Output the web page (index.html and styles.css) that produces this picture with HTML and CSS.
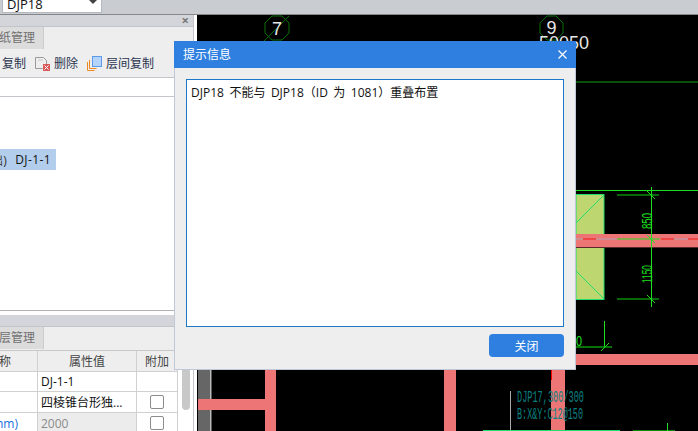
FILE: index.html
```html
<!DOCTYPE html>
<html lang="zh">
<head>
<meta charset="utf-8">
<title>提示信息</title>
<link rel="stylesheet" href="styles.css">
</head>
<body>
<div class="page">
  <header class="topbar">
    <div class="combo"><span class="combo-text">DJP18</span><span class="combo-arrow"></span></div>
  </header>
  <main class="workspace">
    <aside class="side">
      <section class="pane pane-top">
        <div class="pane-title"><span class="pane-x">×</span></div>
        <div class="tabs"><div class="tab">图纸管理</div></div>
        <div class="toolbar">
          <span class="tool tool-first">复制</span>
          <span class="tool tool-del">
            <svg class="icon" viewBox="0 0 16 16" width="16" height="16"><path d="M.5 2.500h8l3 3v4M.5 2.500v11h7" fill="none" stroke="#9a9a9a"/><path d="M3 5h5" stroke="#c8c8c8"/><rect x="8" y="9" width="7" height="7" fill="#d85a5a"/><path d="M9.500 10.500l4 4m0-4l-4 4" stroke="#fff"/></svg>
            删除
          </span>
          <span class="tool tool-copy">
            <svg class="icon" viewBox="0 0 16 16" width="16" height="16"><path d="M.5 7v8.500h7M2.500 5v8.500h7" fill="none" stroke="#ee8a22"/><rect x="5.500" y="1.500" width="9" height="10" fill="#b4d4fb" stroke="#5b9bea"/></svg>
            层间复制
          </span>
        </div>
        <div class="subbar"></div>
        <div class="tree">
          <div class="tree-row"><span class="tree-clip">(基础)</span><span class="tree-name">DJ-1-1</span></div>
        </div>
      </section>
      <section class="pane pane-bottom">
        <div class="pane-title"></div>
        <div class="tabs"><div class="tab">图层管理</div></div>
        <div class="props">
          <div class="grid">
            <div class="cell head c1 c1-head"><span class="clip-end">属性名称</span></div>
            <div class="cell head c2">属性值</div>
            <div class="cell head c3">附加</div>
            <div class="cell c1"></div>
            <div class="cell c2 val">DJ-1-1</div>
            <div class="cell c3"></div>
            <div class="cell c1"></div>
            <div class="cell c2 val">四棱锥台形独...</div>
            <div class="cell c3"><span class="check"></span></div>
            <div class="cell c1 blue"><span class="clip-end">长度(mm)</span></div>
            <div class="cell c2 val muted">2000</div>
            <div class="cell c3"><span class="check"></span></div>
          </div>
          <div class="scroll"><div class="thumb"></div></div>
        </div>
      </section>
    </aside>
    <div class="gutter"></div>
    <svg class="canvas" viewBox="197 14 501 417" width="501" height="417">
      <rect x="197" y="14" width="501" height="417" fill="#000"/>
      <rect x="198" y="369" width="12" height="62" fill="#666"/>
      <rect x="210" y="369" width="1.500" height="62" fill="#bbb"/>
      <rect x="198" y="398" width="68" height="11" fill="#ee7575"/>
      <rect x="265" y="369" width="11" height="62" fill="#ee7575"/>
      <rect x="444" y="369" width="12" height="62" fill="#ee7575"/>
      <rect x="551" y="369" width="14" height="62" fill="#ee7575"/>
      <rect x="551" y="369" width="1" height="10" fill="#f00"/>
      <rect x="576" y="353" width="122" height="11" fill="#ee7575"/>

      <polygon points="272,15 282,15 289,22 289,32 282,39 272,39 265,32 265,22" fill="none" stroke="#0a6e0a"/>
      <path d="M263 41L289 15" stroke="#0a6e0a"/>
      <text x="277" y="34" class="axis">7</text>
      <polygon points="547,15 556,15 563,22 563,32 556,39 547,39 540,32 540,22" fill="none" stroke="#0a6e0a"/>
      <text x="551.500" y="33" class="axis">9</text>
      <text x="539" y="48" class="dim-big">50050</text>

      <rect x="576" y="80" width="122" height="2" fill="#0a4f0a"/>
      <rect x="576" y="189" width="122" height="1" fill="#1ee01e"/>

      <rect x="576" y="193.500" width="28" height="105" fill="#bdd66f" stroke="#1ee06a"/>
      <path d="M604 194L576 222M576 270L604 298" stroke="#1ee06a"/>
      <rect x="576" y="233" width="122" height="13" fill="#ee7575"/>
      <rect x="576" y="246" width="122" height="1" fill="#5a2a2a"/>
      <path d="M576 238h7" stroke="#aaa"/>
      <path d="M583 238h13M661 238h13M688 238h10" stroke="#f01818"/>
      <path d="M596 238h21M674 238h14" stroke="#b0a0b0"/>
      <path d="M617 238h43" stroke="#1ee01e"/>

      <path d="M617 194h42M617 298h42" stroke="#0a8a0a" stroke-width="1.500"/>
      <path d="M651.500 186V306" stroke="#1ee01e"/>
      <path d="M647 190l8 8M647 234l8 8M647 294l8 8" stroke="#1ee01e"/>
      <text class="dim-v" transform="translate(652 228) rotate(-90)" textLength="16" lengthAdjust="spacingAndGlyphs">850</text>
      <text class="dim-v" transform="translate(652 282) rotate(-90)" textLength="18" lengthAdjust="spacingAndGlyphs">1150</text>

      <path d="M604.500 320V346" stroke="#1ee01e"/>
      <path d="M576 346h36" stroke="#0a9a0a" stroke-width="1.500"/>
      <path d="M601 350l8-8" stroke="#1ee01e"/>
      <text x="576" y="345" class="dim-small" textLength="6" lengthAdjust="spacingAndGlyphs">0</text>

      <path d="M510.500 390V431" stroke="#aaa"/>
      <text x="517" y="401" class="label" textLength="67" lengthAdjust="spacingAndGlyphs">DJP17,300/300</text>
      <text x="517" y="418" class="label" textLength="66" lengthAdjust="spacingAndGlyphs">B:X&amp;Y:C12@150</text>
      <rect x="483" y="429" width="137" height="2" fill="#1ee06a"/>
      <rect x="633" y="429" width="42" height="2" fill="#0a8a0a"/>
      <path d="M667.500 422V431" stroke="#1ee01e"/>
    </svg>
  </main>

  <section class="dialog">
    <div class="dialog-head">
      <span class="dialog-title">提示信息</span>
      <svg class="dialog-x" viewBox="0 0 9 9" width="9" height="9"><path d="M.5.5l8 8m0-8l-8 8" stroke="#fff" stroke-width="1.200" fill="none"/></svg>
    </div>
    <div class="dialog-body">
      <div class="message">DJP18 不能与 DJP18（ID 为 1081）重叠布置</div>
      <div class="actions"><button class="close-btn">关闭</button></div>
    </div>
  </section>
</div>
</body>
</html>
```
FILE: styles.css
```css
* { box-sizing: border-box; }
html, body { margin: 0; padding: 0; }
body {
  width: 698px;
  height: 431px;
  overflow: hidden;
  background: #fff;
  font-family: "Open Sans", "Noto Sans CJK SC", sans-serif;
  font-size: 12px;
  color: #111;
}
.page { position: relative; width: 698px; height: 431px; display: flex; flex-direction: column; }

.topbar {
  height: 15px;
  background: #c9ccd0;
  border-bottom: 1px solid #85878a;
  padding-left: 2px;
  flex: none;
}
.combo {
  width: 100px;
  height: 13px;
  background: #fff;
  border: 1px solid #b5b8bc;
  border-top: 0;
  position: relative;
  overflow: hidden;
}
.combo-text { display: block; margin: -5px 0 0 4px; font-size: 13px; line-height: 18px; }
.combo-arrow {
  position: absolute; right: 4px; top: 0;
  border: 4px solid transparent; border-top: 4px solid #444; border-bottom: 0;
}

.workspace { flex: 1; display: flex; min-height: 0; }
.side { width: 194px; flex: none; display: flex; flex-direction: column; border-right: 1px solid #c4c6cc; }
.gutter { width: 3px; flex: none; background: #fff; }
.canvas { display: block; flex: none; }

.pane { display: flex; flex-direction: column; overflow: hidden; }
.pane-top { height: 300px; flex: none; padding-bottom: 4px; background: #fff; }
.pane-bottom { flex: 1; min-height: 0; }
.pane-title {
  height: 11px; flex: none;
  background: #d3d5da;
  display: flex; justify-content: flex-end; align-items: center;
  padding-right: 4px;
}
.pane-x { color: #777; font-size: 13px; line-height: 11px; font-weight: 700; }
.tabs {
  height: 23px; flex: none;
  background: #eee;
  border-top: 1px solid #c2c4ca;
  overflow: hidden;
}
.pane-bottom .tabs { height: 24px; }
.tab {
  width: 44px; height: 22px;
  background: #dcdcdc;
  color: #707070;
  line-height: 22px;
  white-space: nowrap;
  font-size: 12px;
  padding-right: 8px;
  border-right: 1px solid #ccc;
  overflow: hidden;
  display: flex;
  justify-content: flex-end;
}

.toolbar {
  height: 28px; flex: none;
  background: #eee;
  display: flex; align-items: center;
  color: #2a3550;
  font-size: 12px;
  overflow: hidden;
}
.tool { display: flex; align-items: center; white-space: nowrap; }
.tool-first { margin-left: 2px; }
.tool-del { margin-left: 9px; gap: 3px; }
.tool-copy { margin-left: 9px; gap: 3px; }
.icon { display: block; flex: none; }
.subbar { height: 20px; flex: none; background: #fff; border-top: 1px solid #c4c6cc; border-bottom: 1px solid #c4c6cc; }
.tree { flex: 1; background: #fff; padding-top: 52px; border-bottom: 1px solid #b0b0b0; }
.tree-row {
  width: 56px; height: 21px;
  background: #b3cdec;
  display: flex; align-items: center; justify-content: flex-end;
  padding-right: 5px;
  overflow: hidden;
  white-space: nowrap;
  font-size: 12px;
  letter-spacing: .4px;
}
.tree-clip { flex: none; color: #333; margin-right: 8px; }
.tree-name { flex: none; }

.props { flex: 1; min-height: 0; display: flex; background: #fff; border-top: 1px solid #c8c8cc; }
.grid {
  width: 178px; flex: none;
  display: grid;
  grid-template-columns: 38px 99px 41px;
  grid-template-rows: 21px 20px 21px 21px;
}
.cell {
  border-right: 1px solid #d0d0d0;
  border-bottom: 1px solid #d0d0d0;
  padding: 0 4px;
  display: flex; align-items: center;
  white-space: nowrap;
  overflow: hidden;
}
.head { background: #eee; justify-content: center; color: #444; }
.c1 { justify-content: flex-end; padding: 0 19px 0 0; }
.head.c1-head { justify-content: flex-end; padding: 0 26px 0 0; }
.c3 { justify-content: center; padding: 0; }
.val { padding-left: 3px; color: #111; }
.muted { background: #ececec; color: #8a8a8a; }
.blue { color: #1a6fe0; }
.clip-end { flex: none; }
.check {
  width: 14px; height: 14px;
  background: #fff;
  border: 1px solid #8c8c8c;
  border-radius: 2px;
}
.scroll { width: 15px; flex: none; padding-left: 4px; background: #fff; }
.thumb { width: 8px; height: 59px; background: #c8c8c8; border-radius: 0 0 4px 4px; }

.dialog {
  position: absolute;
  left: 174px; top: 41px;
  width: 402px; height: 329px;
  background: #eee;
  border: 1px solid #c0c8d8;
  border-top: 0;
  display: flex; flex-direction: column;
}
.dialog-head {
  height: 27px; flex: none;
  background: #2e7fdf;
  color: #fff;
  display: flex; align-items: center; justify-content: space-between;
  padding: 0 9px 0 9px;
  margin: 0 -1px;
}
.dialog-title { font-size: 12px; line-height: 27px; }
.dialog-x { display: block; }
.dialog-body { flex: 1; padding: 11px 11px 11px 11px; display: flex; flex-direction: column; gap: 7px; min-height: 0; }
.message {
  height: 248px; flex: none;
  background: #fff;
  border: 1px solid #1e78c8;
  padding: 4px 4px;
  color: #111;
  font-size: 12px;
  line-height: 18px;
  word-spacing: 2.4px;
}
.actions { display: flex; justify-content: flex-end; }
.close-btn {
  width: 75px; height: 23px;
  background: #2e7fdf;
  color: #fff;
  border: 0;
  border-radius: 4px;
  padding: 0;
  font: inherit;
  font-size: 12px;
}

.axis { fill: #e6e6e6; font-family: "Liberation Sans", sans-serif; font-size: 18px; text-anchor: middle; }
.dim-big { fill: #e6e6e6; font-family: "Liberation Sans", sans-serif; font-size: 18px; }
.dim-v { fill: #1ee01e; font-family: "Liberation Sans", sans-serif; font-size: 15px; font-weight: 400; }
.dim-small { fill: #1ee01e; font-family: "Liberation Sans", sans-serif; font-size: 15px; }
.label { fill: #0a8080; font-family: "Liberation Mono", monospace; font-size: 16px; }
```
